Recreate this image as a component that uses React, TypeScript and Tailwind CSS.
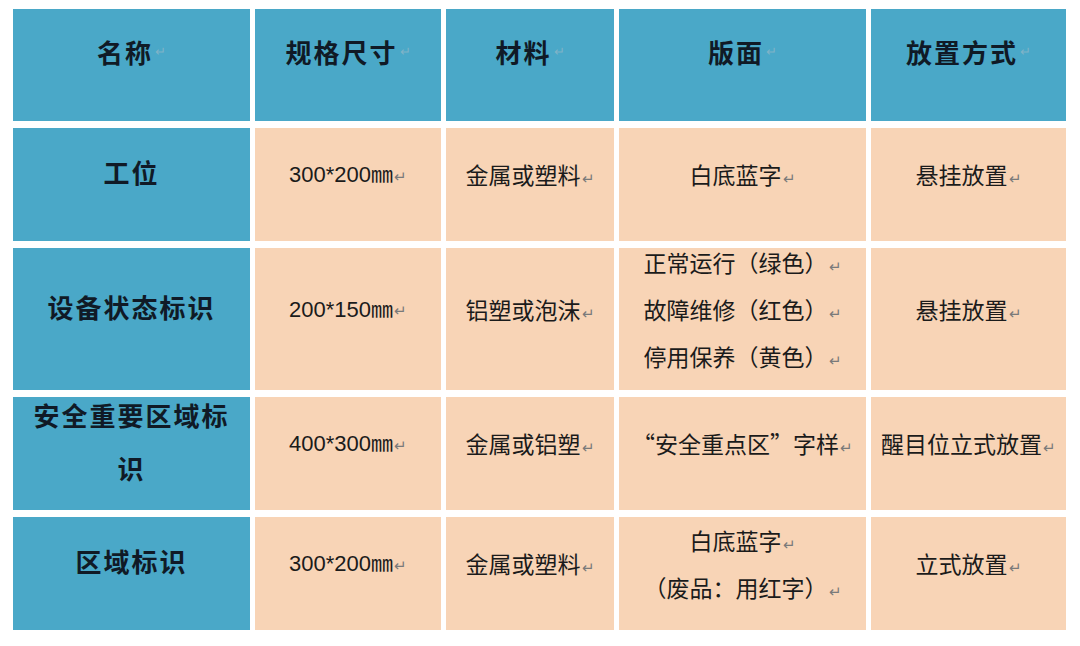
import React from 'react';

const cjk = '"Noto Sans CJK SC", "Noto Sans", sans-serif';
const num = '"Liberation Sans", "Noto Sans CJK SC", sans-serif';

// paragraph mark left behind by the word processor
const Mark: React.FC<{ faint?: boolean }> = ({ faint }) => (
  <span
    className={
      faint
        ? 'ml-[2px] align-middle text-[13px] leading-none text-[#7fb3c7]'
        : 'ml-[1px] align-middle text-[15px] leading-none text-[#7a7a7a]'
    }
  >
    ↵
  </span>
);

const HeadCell: React.FC<{ text: string }> = ({ text }) => (
  <div className="flex items-center justify-center bg-[#4aa8c8] pb-[28px]">
    <span className="text-[26px] font-bold tracking-[2px] text-[#101a26]" style={{ fontFamily: cjk }}>
      {text}
    </span>
    <Mark faint />
  </div>
);

const NameCell: React.FC<{ children: React.ReactNode }> = ({ children }) => (
  <div className="flex items-center justify-center bg-[#4aa8c8] pb-[26px]">
    <span className="text-center text-[26px] font-bold leading-[53px] tracking-[2px] text-[#101a26]" style={{ fontFamily: cjk }}>
      {children}
    </span>
  </div>
);

const Cell: React.FC<{ lines: string[]; numeric?: boolean }> = ({ lines, numeric }) => (
  <div className="flex flex-col items-center justify-center bg-[#f8d4b6] pb-[20px]">
    {lines.map((l) => (
      <div
        key={l}
        className={
          numeric
            ? 'whitespace-nowrap text-[22px] leading-[47px] text-[#1b1b1b]'
            : 'whitespace-nowrap text-[23px] leading-[47px] text-[#1b1b1b]'
        }
        style={{ fontFamily: numeric ? num : cjk }}
      >
        {l}
        <Mark />
      </div>
    ))}
  </div>
);

const rows = [
  { name: <>工位</>, size: '300*200㎜', mat: '金属或塑料', face: ['白底蓝字'], place: '悬挂放置' },
  {
    name: <>设备状态标识</>,
    size: '200*150㎜',
    mat: '铝塑或泡沫',
    face: ['正常运行（绿色）', '故障维修（红色）', '停用保养（黄色）'],
    place: '悬挂放置',
  },
  {
    name: (
      <>
        安全重要区域标
        <br />识
      </>
    ),
    size: '400*300㎜',
    mat: '金属或铝塑',
    face: ['“安全重点区”字样'],
    place: '醒目位立式放置',
  },
  { name: <>区域标识</>, size: '300*200㎜', mat: '金属或塑料', face: ['白底蓝字', '（废品：用红字）'], place: '立式放置' },
];

export default function App() {
  return (
    <div className="h-[646px] w-[1080px] overflow-hidden bg-white pl-[13px] pt-[9px]">
      <div className="grid grid-cols-[237px_186px_168px_247px_195px] grid-rows-[112px_113px_142px_113px_113px] gap-x-[5px] gap-y-[7px]">
        {['名称', '规格尺寸', '材料', '版面', '放置方式'].map((h) => (
          <HeadCell key={h} text={h} />
        ))}
        {rows.map((r, i) => (
          <React.Fragment key={i}>
            <NameCell>{r.name}</NameCell>
            <Cell lines={[r.size]} numeric />
            <Cell lines={[r.mat]} />
            <Cell lines={r.face} />
            <Cell lines={[r.place]} />
          </React.Fragment>
        ))}
      </div>
    </div>
  );
}
